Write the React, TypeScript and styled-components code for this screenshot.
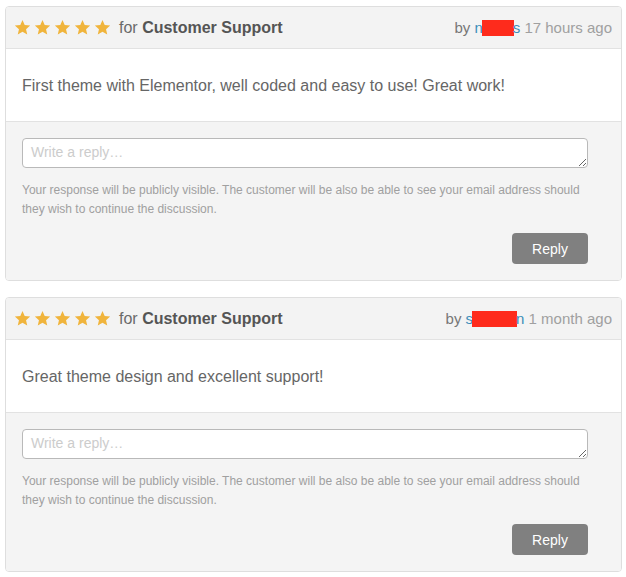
import React from "react";
import styled, { createGlobalStyle } from "styled-components";

const GlobalStyle = createGlobalStyle`
  body {
    margin: 0;
    background: #ffffff;
    font-family: "Liberation Sans", Arial, Helvetica, sans-serif;
  }
`;

type Review = {
  text: string;
  first: string;
  last: string;
  hidden: number;
  when: string;
};

const reviews: Review[] = [
  {
    text: "First theme with Elementor, well coded and easy to use! Great work!",
    first: "n",
    last: "s",
    hidden: 32,
    when: "17 hours ago",
  },
  {
    text: "Great theme design and excellent support!",
    first: "s",
    last: "n",
    hidden: 45,
    when: "1 month ago",
  },
];

function Star() {
  return (
    <StarIcon viewBox="0 0 24 24">
      <polygon points="12,1.5 15.1,8.6 22.8,9.3 17,14.4 18.7,22 12,18 5.3,22 7,14.4 1.2,9.3 8.9,8.6" />
    </StarIcon>
  );
}

function ReviewCard({ review }: { review: Review }) {
  return (
    <Card>
      <Header>
        <Rating>
          <Stars>
            {[0, 1, 2, 3, 4].map((i) => (
              <Star key={i} />
            ))}
          </Stars>
          <For>
            for <strong>Customer Support</strong>
          </For>
        </Rating>
        <Meta>
          <By>by</By>{" "}
          <Author>
            {review.first}
            <Redact $w={review.hidden} />
            {review.last}
          </Author>{" "}
          {review.when}
        </Meta>
      </Header>
      <Body>{review.text}</Body>
      <Footer>
        <ReplyBox placeholder="Write a reply…" />
        <Note>
          Your response will be publicly visible. The customer will be also be
          able to see your email address should they wish to continue the
          discussion.
        </Note>
        <Actions>
          <ReplyButton>Reply</ReplyButton>
        </Actions>
      </Footer>
    </Card>
  );
}

export default function App() {
  return (
    <>
      <GlobalStyle />
      <List>
        {reviews.map((r, i) => (
          <ReviewCard key={i} review={r} />
        ))}
      </List>
    </>
  );
}

const List = styled.div`
  display: flex;
  flex-direction: column;
  gap: 16px;
  padding: 6px 0 0 5px;
`;

const Card = styled.div`
  width: 617px;
  box-sizing: border-box;
  border: 1px solid #dedede;
  border-radius: 4px;
  overflow: hidden;
`;

const Header = styled.div`
  height: 41px;
  display: flex;
  align-items: center;
  justify-content: space-between;
  padding: 0 9px 0 8px;
  background: #f3f3f3;
  border-bottom: 1px solid #e2e2e2;
`;

const Rating = styled.div`
  display: flex;
  align-items: center;
  gap: 8px;
`;

const Stars = styled.div`
  display: flex;
  gap: 3px;
`;

const StarIcon = styled.svg`
  width: 17px;
  height: 17px;
  fill: #f0b43c;
`;

const For = styled.span`
  font-size: 16px;
  color: #6a6a6a;
  padding-top: 1px;

  strong {
    color: #555555;
    font-weight: bold;
  }
`;

const Meta = styled.div`
  font-size: 15px;
  color: #a0a0a0;
`;

const By = styled.span`
  color: #777777;
`;

const Author = styled.span`
  color: #3d8eb9;
`;

const Redact = styled.span<{ $w: number }>`
  display: inline-block;
  width: ${(p) => p.$w}px;
  height: 16px;
  margin: 0 -1px;
  vertical-align: -3px;
  background: #fe2b1c;
`;

const Body = styled.div`
  height: 73px;
  box-sizing: border-box;
  padding: 2px 16px 0;
  display: flex;
  align-items: center;
  background: #ffffff;
  font-size: 16px;
  color: #666666;
  border-bottom: 1px solid #e2e2e2;
`;

const Footer = styled.div`
  background: #f4f4f4;
  padding: 16px 33px 16px 16px;
  display: flex;
  flex-direction: column;
`;

const ReplyBox = styled.textarea`
  box-sizing: border-box;
  width: 100%;
  height: 30px;
  margin: 0;
  padding: 5px 8px;
  border: 1px solid #b9b9b9;
  border-radius: 4px;
  background: #ffffff;
  font-family: "Liberation Sans", Arial, sans-serif;
  font-size: 14px;
  color: #444444;
  outline: none;

  &::placeholder {
    color: #cccccc;
  }
`;

const Note = styled.p`
  margin: 13px 0 0;
  font-size: 12px;
  line-height: 19px;
  color: #a0a0a0;
`;

const Actions = styled.div`
  display: flex;
  justify-content: flex-end;
  margin-top: 14px;
`;

const ReplyButton = styled.button`
  width: 76px;
  height: 31px;
  border: none;
  border-radius: 4px;
  background: #808080;
  color: #ffffff;
  font-family: "Liberation Sans", Arial, sans-serif;
  font-size: 14px;
  cursor: pointer;
`;
